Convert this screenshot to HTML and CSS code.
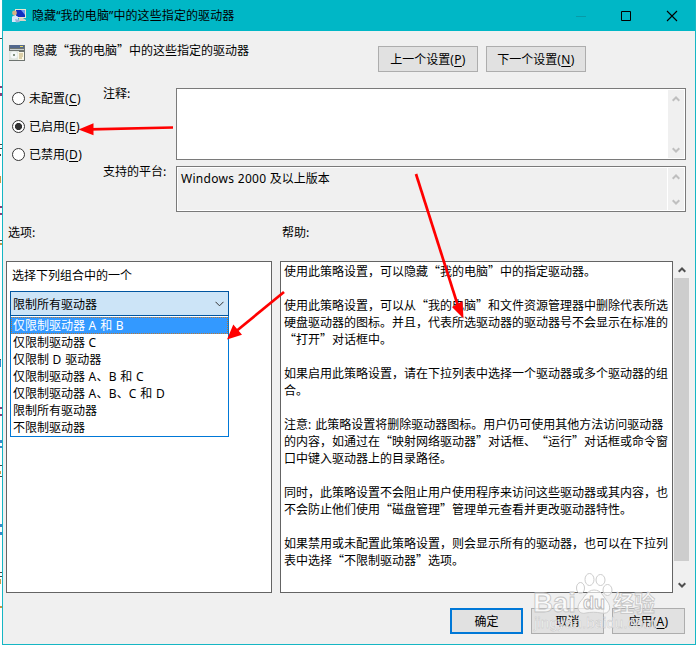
FILE: index.html
```
<!DOCTYPE html>
<html lang="zh-CN">
<head>
<meta charset="utf-8">
<title>隐藏“我的电脑”中的这些指定的驱动器</title>
<link rel="stylesheet" href="styles.css">
</head>
<body>
<div class="desktop">
  <svg class="backdrop" width="2" height="648" viewBox="0 0 2 648" shape-rendering="crispEdges">
    <path d="M0 38h2v1H0zM0 144h2v1H0zM0 148h2v1H0zM0 154h1v2H0zM0 240h2v1H0zM0 359h1v1H0zM0 465h2v1H0zM0 476h2v1H0zM0 572h2v1H0zM0 576h2v1H0z" fill="#444"/>
    <path d="M0 86h2v2H0zM0 93h2v3H0zM0 206h2v2H0zM0 213h2v2H0zM0 407h2v2H0zM0 414h2v2H0z" fill="#8a3f78"/>
    <path d="M0 360h1v7H0zM0 440h2v3H0zM0 446h2v2H0zM0 524h2v3H0zM0 532h2v3H0z" fill="#3b86c8"/>
    <path d="M0 176h1v7H0zM0 243h2v2H0zM0 471h1v3H0zM0 579h1v5H0zM0 606h2v2H0z" fill="#c69848"/>
  </svg>
  <main class="window">
    <header class="titlebar">
      <svg class="title-icon" width="18" height="16" viewBox="0 0 18 16">
        <path d="M4 1h11v9H4z" fill="#e8e4d0"/>
        <path d="M5 2h9v7H5z" fill="#102fc0"/>
        <path d="M10 2h4v5z" fill="#6e9bf5"/>
        <path d="M8 10h4l3 2v1H7z" fill="#d8d2c6"/>
        <circle cx="3.5" cy="5" r="2.4" fill="#d5b384"/>
        <path d="M1 9c1-2 5-2 6 0v5H1z" fill="#d4e8fb"/>
        <path d="M4 11l4 1 1 2-4 .5z" fill="#9db2d8"/>
      </svg>
      <h1 class="title">隐藏“我的电脑”中的这些指定的驱动器</h1>
      <svg class="window-controls" width="112" height="30" viewBox="0 0 112 30" fill="none">
        <path d="M0 15.500h10" stroke="#079ba8"/>
        <path d="M45.500 10.500h9v9h-9z" stroke="#000"/>
        <path d="M91 10l10 10M101 10l-10 10" stroke="#000" stroke-width="1.100"/>
      </svg>
    </header>

    <section class="policy">
      <svg class="policy-icon" width="16" height="16" viewBox="0 0 16 16">
        <path d="M0 0h16v16H0z" fill="#6e7470"/>
        <path d="M1 0h14v3H1z" fill="#53688d"/>
        <path d="M11 1h3v1h-3z" fill="#e9d65c"/>
        <path d="M1 4h14v1H1z" fill="#c9cfd1"/>
        <path d="M0 6h10v9H0z" fill="#dfe5df"/>
        <circle cx="5" cy="10" r="3.500" fill="#f4f8f8"/>
        <circle cx="5" cy="10" r="1" fill="#61745a"/>
        <path d="M9 7h6v8H9z" fill="#fbf8e7"/>
        <path d="M10 9h4M10 11h4M10 13h3" stroke="#bba66b"/>
      </svg>
      <p class="policy-name">隐藏“我的电脑”中的这些指定的驱动器</p>
      <button class="btn nav">上一个设置<span class="latin">(<u>P</u>)</span></button>
      <button class="btn nav">下一个设置<span class="latin">(<u>N</u>)</span></button>
    </section>

    <section class="state">
      <div class="radios">
        <label class="radio"><i class="dot"></i><span class="radio-text">未配置<span class="latin">(<u>C</u>)</span></span></label>
        <label class="radio"><i class="dot on"></i><span class="radio-text">已启用<span class="latin">(<u>E</u>)</span></span></label>
        <label class="radio"><i class="dot"></i><span class="radio-text">已禁用<span class="latin">(<u>D</u>)</span></span></label>
      </div>
      <div class="fields">
        <span class="field-label">注释:</span>
        <div class="box comment">
          <div class="mini-scroll">
            <svg width="8" height="6" viewBox="0 0 8 6"><path d="M.7 4.700L4 1.500l3.300 3.200"/></svg>
            <svg width="8" height="6" viewBox="0 0 8 6"><path d="M.7 1.300L4 4.500l3.300-3.200"/></svg>
          </div>
        </div>
        <span class="field-label">支持的平台:</span>
        <div class="box platform">
          <p class="platform-text"><span class="latin win">Windows 2000 </span>及以上版本</p>
          <div class="mini-scroll">
            <svg width="8" height="6" viewBox="0 0 8 6"><path d="M.7 4.700L4 1.500l3.300 3.200"/></svg>
            <svg width="8" height="6" viewBox="0 0 8 6"><path d="M.7 1.300L4 4.500l3.300-3.200"/></svg>
          </div>
        </div>
      </div>
    </section>

    <section class="details">
      <div class="options">
        <h2 class="heading">选项:</h2>
        <div class="panel">
          <p class="prompt">选择下列组合中的一个</p>
          <div class="combo"><span>限制所有驱动器</span>
            <svg width="9" height="6" viewBox="0 0 9 6"><path d="M.5.8l4 4 4-4" fill="none" stroke="#333"/></svg>
          </div>
          <ul class="list">
            <li class="selected">仅限制驱动器<span class="latin"> A </span>和<span class="latin"> B</span></li>
            <li>仅限制驱动器<span class="latin"> C</span></li>
            <li>仅限制<span class="latin"> D </span>驱动器</li>
            <li>仅限制驱动器<span class="latin"> A</span>、<span class="latin">B </span>和<span class="latin"> C</span></li>
            <li>仅限制驱动器<span class="latin"> A</span>、<span class="latin">B</span>、<span class="latin">C </span>和<span class="latin"> D</span></li>
            <li>限制所有驱动器</li>
            <li>不限制驱动器</li>
          </ul>
        </div>
      </div>
      <div class="help">
        <h2 class="heading">帮助:</h2>
        <div class="help-row">
          <div class="panel help-text">
            <p>使用此策略设置，可以隐藏“我的电脑”中的指定驱动器。</p>
            <p>使用此策略设置，可以从“我的电脑”和文件资源管理器中删除代表所选<br>硬盘驱动器的图标。并且，代表所选驱动器的驱动器号不会显示在标准的<br>“打开”对话框中。</p>
            <p>如果启用此策略设置，请在下拉列表中选择一个驱动器或多个驱动器的组<br>合。</p>
            <p>注意<span class="latin">: </span>此策略设置将删除驱动器图标。用户仍可使用其他方法访问驱动器<br>的内容，如通过在“映射网络驱动器”对话框、“运行”对话框或命令窗<br>口中键入驱动器上的目录路径。</p>
            <p>同时，此策略设置不会阻止用户使用程序来访问这些驱动器或其内容，也<br>不会防止他们使用“磁盘管理”管理单元查看并更改驱动器特性。</p>
            <p>如果禁用或未配置此策略设置，则会显示所有的驱动器，也可以在下拉列<br>表中选择“不限制驱动器”选项。</p>
          </div>
          <div class="scrollbar">
            <svg width="8" height="6" viewBox="0 0 8 6"><path d="M.7 4.700L4 1.500l3.300 3.200"/></svg>
            <div class="thumb"></div>
            <svg width="8" height="6" viewBox="0 0 8 6"><path d="M.7 1.300L4 4.500l3.300-3.200"/></svg>
          </div>
        </div>
      </div>
    </section>

    <footer class="actions">
      <button class="btn action primary">确定</button>
      <button class="btn action">取消</button>
      <button class="btn action">应用<span class="latin">(<u>A</u>)</span></button>
    </footer>
  </main>

  <svg class="overlay" width="696" height="648" viewBox="0 0 696 648">
    <g stroke="#f00" stroke-width="2.700" fill="#f00">
      <path d="M173 127.500L90 129.300"/>
      <path d="M416 174l42 132"/>
      <path d="M284 292l-47 38.500"/>
      <path stroke="none" d="M78.500 129.500l15-6.200v12zM463.500 318.500l-11.500-11.500 10.500-6zM227 339.500l6.300-15 8.700 10.300z"/>
    </g>
    <g class="watermark">
      <g class="paw">
        <ellipse cx="580.500" cy="588" rx="4" ry="5.500"/>
        <ellipse cx="589.500" cy="579.500" rx="4.500" ry="6"/>
        <ellipse cx="600.500" cy="580" rx="4.500" ry="5.500"/>
        <ellipse cx="607.500" cy="590" rx="4.500" ry="5.500"/>
        <path d="M594 590c-7 0-10 8-14 12-5 7 0 13 6 11 5-1 10-1 15 0 9 2 11-6 6-12-4-5-6-11-13-11z"/>
      </g>
      <text class="brand" x="533" y="612" textLength="43" lengthAdjust="spacingAndGlyphs">Bai</text>
      <text class="du" x="583" y="609" textLength="22" lengthAdjust="spacingAndGlyphs">du</text>
      <text class="brand cn" x="613" y="611" textLength="42" lengthAdjust="spacingAndGlyphs">经验</text>
      <text class="url" x="534" y="628" textLength="122" lengthAdjust="spacingAndGlyphs">jingyan.baidu.com</text>
    </g>
  </svg>
</div>
</body>
</html>
```
FILE: styles.css
```
* { box-sizing: border-box; }
body, h1, h2, p, ul { margin: 0; padding: 0; }
body {
  background: #fff;
  color: #000;
  font: 12px/17px "Noto Sans CJK SC", sans-serif;
  text-spacing-trim: space-all;
  overflow: hidden;
}
h1, h2 { font-size: 12px; font-weight: 400; }
ul { list-style: none; }
svg { display: block; flex: none; }
u { text-underline-offset: 2px; }
.latin { font-family: "Noto Sans", sans-serif; line-height: 0; letter-spacing: .4px; white-space: pre; }

.desktop { position: relative; display: flex; width: 696px; height: 648px; }
.window {
  width: 694px;
  height: 645px;
  border: 1px solid #15b6c4;
  border-top: 0;
  background: #f0f0f0;
}

.titlebar { display: flex; align-items: center; height: 31px; padding-left: 8px; background: #00b7c6; }
.title { margin-left: 3px; font-family: "Noto Sans", "Noto Sans CJK SC", sans-serif; letter-spacing: .1px; white-space: nowrap; }
.window-controls { margin-left: auto; margin-right: 7px; }

.policy { display: flex; align-items: flex-start; height: 57px; padding: 14px 0 0 6px; }
.policy-name { width: 345px; margin: -4px 0 0 8px; }
.btn {
  height: 26px;
  padding: 0 0 1px;
  border: 1px solid #adadad;
  background: #e1e1e1;
  color: #000;
  font: inherit;
  line-height: 22px;
}
.nav { width: 100px; margin: 1px 8px 0 0; }

.state { display: flex; height: 136px; padding-left: 9px; }
.radios { width: 91px; }
.radio { display: flex; align-items: center; height: 20px; margin-bottom: 8px; }
.radio-text { padding-bottom: 2px; white-space: nowrap; }
.dot { width: 13px; height: 13px; margin-right: 4px; border: 1px solid #333; border-radius: 50%; background: #fff; }
.dot.on { background: radial-gradient(circle, #333 0 3.2px, #fff 3.9px); }
.fields { display: grid; grid-template-columns: 73px 510px; grid-template-rows: 72px 46px; row-gap: 6px; }
.field-label { margin-top: -4px; }
.box { display: flex; justify-content: flex-end; padding: 1px; border: 1px solid #7a7a7a; background: #fff; }
.platform-text { flex: 1; margin-right: 1px; padding: 1px 0 0 3px; background: #f0f0f0; }
.win { letter-spacing: .3px; }
.mini-scroll {
  display: flex;
  flex-direction: column;
  justify-content: space-between;
  align-items: center;
  width: 16px;
  padding: 6px 0 5px;
  background: #f0f0f0;
}
.mini-scroll path { fill: none; stroke: #bfbfbf; stroke-width: 2; }

.details { display: flex; gap: 8px; padding-left: 3px; }
.heading { height: 37px; padding-left: 2px; line-height: 15px; }
.panel { height: 332px; border: 1px solid #646464; background: #fff; }
.options .panel { width: 266px; padding: 4px 3px; }
.prompt { height: 25px; padding-left: 2px; }
.combo {
  display: flex;
  align-items: center;
  justify-content: space-between;
  width: 219px;
  height: 25px;
  padding: 0 4px 0 2px;
  border: 1px solid #0055a0;
  background: #cce4f7;
}
.combo span { padding-bottom: 1px; }
.list { width: 219px; height: 121px; border: 1px solid #0078d7; border-top-width: 0; background: #fff; padding-top: 1px; }
.list li { height: 17px; padding-left: 2px; line-height: 15px; white-space: nowrap; }
.list .selected { outline: 1px dotted #b87838; outline-offset: -1px; background: #3399ff; color: #fff; }
.help-row { display: flex; }
.help-text { width: 393px; padding: 0 0 0 3px; white-space: nowrap; }
.help-text p { margin-bottom: 17px; }
.scrollbar {
  display: flex;
  flex-direction: column;
  justify-content: space-between;
  align-items: center;
  width: 15px;
  margin-left: 1px;
  padding: 6px 0 5px;
}
.scrollbar path { fill: none; stroke: #505050; stroke-width: 2; }
.thumb { width: 15px; height: 283px; margin-bottom: 17px; background: #cdcdcd; }

.actions { display: flex; justify-content: flex-end; gap: 8px; padding: 15px 10px 0 0; }
.action { width: 73px; }
.primary { border: 2px solid #0078d7; }

.overlay { position: absolute; inset: 0; pointer-events: none; }
.watermark { font-family: "Liberation Sans", "Noto Sans CJK SC", sans-serif; }
.paw { fill: #fff; fill-opacity: .65; stroke: #ccc; }
.brand { font-size: 27px; font-weight: 700; fill: #fff; fill-opacity: .7; stroke: #c4c4c4; stroke-width: .8; }
.cn { font-size: 22px; }
.du { font-size: 19px; font-weight: 700; fill: #fff; stroke: #bbb; stroke-width: 1; }
.url { font-size: 14px; fill: #fff; fill-opacity: .85; stroke: #c4c4c4; stroke-width: .4; }
```
